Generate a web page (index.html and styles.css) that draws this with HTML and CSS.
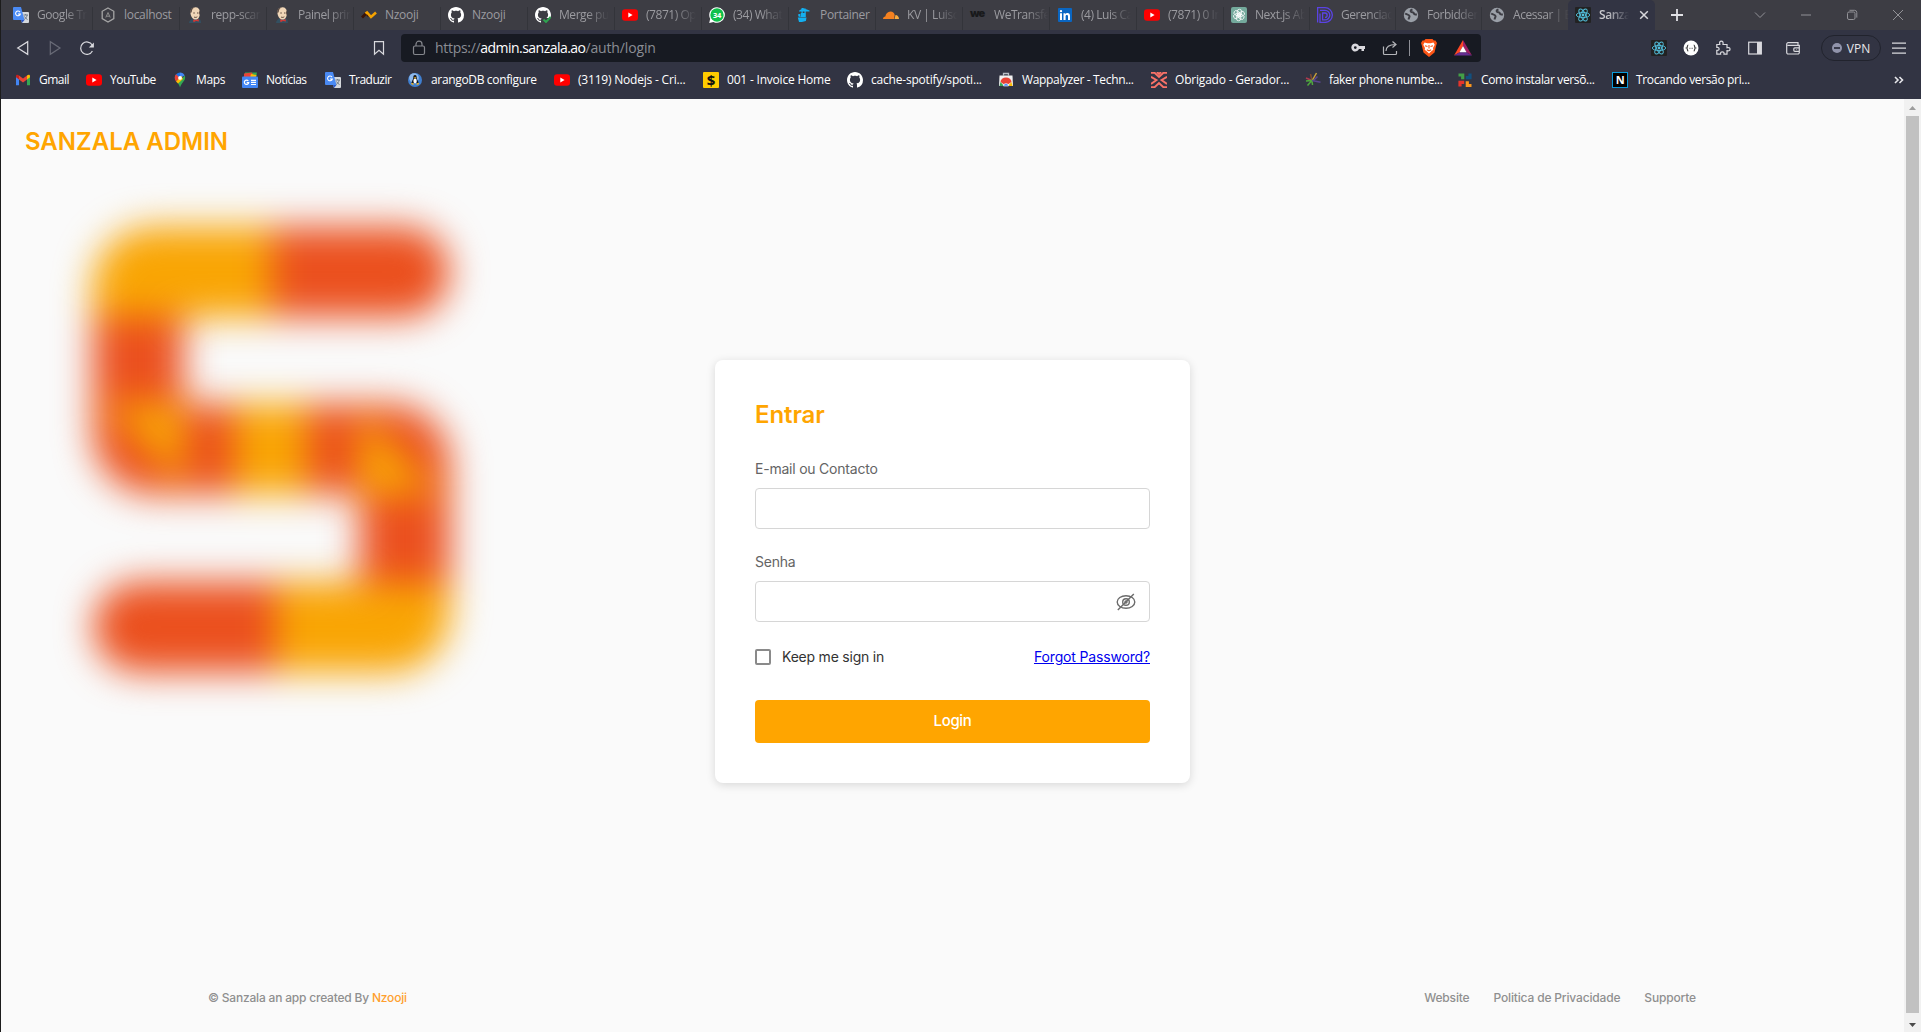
FILE: index.html
```html
<!DOCTYPE html>
<html lang="pt">
<head>
<meta charset="utf-8">
<title>Sanzala Admin</title>
<link rel="stylesheet" href="styles.css">
</head>
<body>
<svg class="sprite" aria-hidden="true">
  <symbol id="translate" viewBox="0 0 16 16"><path d="M6 5h9a1 1 0 0 1 1 1v9a1 1 0 0 1-1 1H9z" fill="#d5d8dc"/><path d="M1 0h7l3.500 13H1a1 1 0 0 1-1-1V1a1 1 0 0 1 1-1z" fill="#4a8af4"/><path d="M8 13h3.500L9 16z" fill="#2a56c6"/><path d="M7 5.100A2.400 2.400 0 1 0 7.300 7H5" fill="none" stroke="#fff" stroke-width="1.100"/><path d="M10.500 8h4.500M12.600 7v1M14.200 8c-.4 2-1.600 3.500-3 4.500M11.500 9.500c.6 1.300 1.700 2.400 3 3" fill="none" stroke="#6f7b88" stroke-width="1"/></symbol>
  <symbol id="hexa" viewBox="0 0 16 16"><path d="M8 1l5.800 3.300v7.300L8 15l-5.800-3.400V4.300z" fill="none" stroke="#a5a5a5" stroke-width="1.300"/><path d="M5.800 10.500L8 5.500l2.200 5M6.500 9.200h3" fill="none" stroke="#8d8d8d" stroke-width="1"/></symbol>
  <symbol id="jenkins" viewBox="0 0 16 16"><path d="M2 16c0-2 2-4 3-4.500l6-.5c2 .5 3 2.500 3 5z" fill="#335061"/><path d="M3.500 4C4 1.500 6 .3 8.300.3c3 0 4.600 2 4.700 5 .1 3.500-1.300 7.300-4.300 7.300C5 12.600 3 8 3.500 4z" fill="#f0d6b7"/><path d="M3.300 6C2.800 2.500 5 .3 8 .3c-2 1-3.200 2.300-3.300 5zM12.300 3c1 1.500.9 4 .4 5.500L12 6z" fill="#5a4a42"/><path d="M6.300 6h1.500M10 6h1.500M7 10c1 .6 2.500.5 3.300-.2" stroke="#49372d" stroke-width=".9" fill="none"/><path d="M6 12.300l2.500 1 3-1.300.5 2.500-3-.6-2.500 1.300z" fill="#d33833"/></symbol>
  <symbol id="zig" viewBox="0 0 16 16"><path d="M1 10.500L5.500 6l2.500 3" fill="none" stroke="#3a1408" stroke-width="2.800"/><path d="M4.500 6.500L6 5.500l4 4.500 5-4.500" fill="none" stroke="#f5a300" stroke-width="2.600"/></symbol>
  <symbol id="github" viewBox="0 0 16 16"><path fill="#fff" d="M8 0C3.580 0 0 3.580 0 8c0 3.540 2.290 6.530 5.470 7.590.4.070.55-.17.55-.38 0-.19-.010-.82-.010-1.490-2.010.37-2.530-.49-2.690-.94-.090-.23-.48-.94-.82-1.130-.28-.15-.68-.52-.010-.53.63-.010 1.080.58 1.230.82.72 1.210 1.870.87 2.330.66.070-.52.28-.87.510-1.070-1.780-.2-3.640-.89-3.640-3.950 0-.87.310-1.590.82-2.150-.080-.2-.36-1.020.080-2.120 0 0 .67-.21 2.200.82.64-.18 1.320-.27 2-.27s1.360.090 2 .27c1.530-1.040 2.200-.82 2.200-.82.44 1.100.16 1.920.080 2.120.510.56.82 1.270.82 2.150 0 3.070-1.870 3.750-3.650 3.950.29.25.54.73.54 1.480 0 1.070-.010 1.930-.010 2.200 0 .21.15.46.55.38A8.010 8.010 0 0 0 16 8c0-4.420-3.580-8-8-8z"/></symbol>
  <symbol id="github-ok" viewBox="0 0 16 16"><use href="#github"/><path d="M7 11h9v5H7z" fill="#3d3d44"/><path d="M8.500 12.500l2.500 2.500 4.600-5" stroke="#2ea44f" stroke-width="1.900" fill="none"/></symbol>
  <symbol id="youtube" viewBox="0 0 16 16"><rect y="2.300" width="16" height="11.500" rx="3" fill="#f00"/><path d="M6.300 5.600v4.900l4.300-2.450z" fill="#fff"/></symbol>
  <symbol id="whats" viewBox="0 0 16 16"><path d="M8 .2a7.800 7.800 0 1 1-3.600 14.700L.2 16l1-4.200A7.800 7.800 0 0 1 8 .2z" fill="#fff"/><circle cx="8" cy="8" r="6.700" fill="#0fc14b"/><text x="8" y="10.800" text-anchor="middle" font-size="7.500" font-weight="700" fill="#fff">34</text></symbol>
  <symbol id="portainer" viewBox="0 0 16 16"><path d="M5.500 1h1.200v8H5.500zM8.500 1.500h1.200V8H8.500zM3 3.800L7 1l6.500 2.600v.8L3 4.600zM2.300 7h2v2.200h-2zM4.800 6h5v4h-7V9.500h2zM1.800 10.500h8.700l-.6 3.500-4 1H3z" fill="#13b0f0"/></symbol>
  <symbol id="cloud" viewBox="0 0 16 16"><path d="M0 12c0-1.600 1-2.500 2.300-2.500C2.800 6.700 4.700 4.500 7.500 4.500c2.300 0 3.800 1.500 4.200 3.500L11 12z" fill="#f48120"/><path d="M11.500 12l1-4c2 0 3.500 1.800 3.500 4z" fill="#faad3f"/></symbol>
  <symbol id="linkedin" viewBox="0 0 16 16"><rect x="1" y="1" width="14" height="14" rx="1" fill="#0a66c2"/><path d="M3 6.300h2V13H3zM4 3a1.150 1.150 0 1 1 0 2.300A1.150 1.150 0 0 1 4 3zM6.500 6.300h1.900v.9c.9-1.600 4.600-1.700 4.600 1.600V13h-2V9.300c0-1.900-2.400-1.700-2.400 0V13H6.500z" fill="#fff"/></symbol>
  <symbol id="gpt" viewBox="0 0 16 16"><rect width="16" height="16" rx="2" fill="#74aa9c"/><g fill="none" stroke="#fff" stroke-width=".8"><rect id="lobe" x="6.300" y="2.300" width="4.300" height="6.800" rx="2.100"/><use href="#lobe" transform="rotate(60 8 8)"/><use href="#lobe" transform="rotate(120 8 8)"/><use href="#lobe" transform="rotate(180 8 8)"/><use href="#lobe" transform="rotate(240 8 8)"/><use href="#lobe" transform="rotate(300 8 8)"/></g></symbol>
  <symbol id="dd" viewBox="0 0 16 16"><path d="M.6 15.400V.7H8a7.300 7.300 0 0 1 0 14.700H3V6.500M3 3.300h5a4.800 4.800 0 0 1 0 9.600H5.600V6H8a2 2 0 0 1 0 4.300" fill="none" stroke="#5b43e6" stroke-width="1.300"/></symbol>
  <symbol id="globe" viewBox="0 0 16 16"><circle cx="8" cy="8" r="7.200" fill="#9ba0a8"/><path d="M2.200 6.500c1.500 1 3.800 1 4.300 2.500.4 1.200-1 1.700-.8 3.500M9.500 2.500C8 3 7 3.800 8 4.800c1 .8 2.300 0 2.800 1.300.4 1.200 1.500 1.700 3 1.200" fill="none" stroke="#3d3d44" stroke-width="2"/></symbol>
  <symbol id="react" viewBox="0 0 16 16"><rect width="16" height="16" rx="1" fill="#222"/><g fill="none" stroke="#53c1de" stroke-width=".9"><ellipse cx="8" cy="8" rx="6.700" ry="2.600"/><ellipse cx="8" cy="8" rx="6.700" ry="2.600" transform="rotate(60 8 8)"/><ellipse cx="8" cy="8" rx="6.700" ry="2.600" transform="rotate(120 8 8)"/></g><circle cx="8" cy="8" r="1.400" fill="#53c1de"/></symbol>
  <symbol id="gmail" viewBox="0 0 16 16"><path d="M1 4v9.300h3V7z" fill="#4285f4"/><path d="M15 4v9.300h-3V7z" fill="#34a853"/><path d="M4 3.500l4 3 4-3v4L8 10.500l-4-3z" fill="#ea4335"/><path d="M1 4.200C1 2.700 2.600 2.300 4 3.500v4L1 5.300z" fill="#c5221f"/><path d="M15 4.200c0-1.500-1.600-1.900-3-.7v4l3-2.200z" fill="#fbbc04"/></symbol>
  <symbol id="maps" viewBox="0 0 16 16"><path d="M2.800 5.500A5.300 5.300 0 0 1 8 .5L8 6z" fill="#1a73e8"/><path d="M8 .5a5.300 5.300 0 0 1 4.700 3L8 6z" fill="#4285f4"/><path d="M4 2.200L8 6 4 9.500C2.300 7 2.200 4.300 4 2.200z" fill="#ea4335"/><path d="M12.700 3.500c1.300 3-.4 5.200-2 7C9 12.500 8.700 14 8 15.500 7.500 14 7 12.700 5.800 11.300z" fill="#34a853"/><path d="M4 9.500L9.500 4l1.500 3-5 4.600z" fill="#fbbc04"/><circle cx="8" cy="5.900" r="1.900" fill="#fff"/></symbol>
  <symbol id="news" viewBox="0 0 16 16"><path d="M3 .5h12l-1 5H3z" fill="#34a853"/><path d="M2 1.500l8-1 2 5H2z" fill="#ea4335"/><path d="M9 2l5.500 1-1 3H8z" fill="#fbbc04"/><rect y="4.500" width="16" height="11.500" rx="1" fill="#4285f4"/><path d="M6.300 8.900A2.200 2.200 0 1 0 6.700 10.700H4.700M9 8.300h5M9 10.400h5M9 12.500h5" fill="none" stroke="#fff" stroke-width="1.200"/></symbol>
  <symbol id="linux" viewBox="0 0 16 16"><circle cx="8" cy="8" r="7" fill="#3f7fd0"/><circle cx="7" cy="6" r="4.800" fill="#8fb9ea"/><path d="M8 3c1.500 0 1.700 1.300 1.700 2.700s1.800 3.300 1.800 5.300h-7c0-2 1.800-3.500 1.800-5.300S6.500 3 8 3z" fill="#16181c"/><ellipse cx="8.100" cy="9" rx="1.700" ry="2.400" fill="#fff"/><path d="M4.300 11.300l2.300 1M11.900 11.300l-2.300 1M7.400 5.700h1.400" stroke="#f0b21a" stroke-width="1.400"/></symbol>
  <symbol id="dollar" viewBox="0 0 16 16"><rect width="16" height="16" rx="1" fill="#fc0"/><text x="8" y="13.500" text-anchor="middle" font-size="15" font-weight="700" fill="#111">$</text></symbol>
  <symbol id="store" viewBox="0 0 16 16"><path d="M5.500 3.500V1.500h5v2" fill="none" stroke="#b8bdc4" stroke-width="1.300"/><path d="M1.500 3.500h13l.5 10.500H1z" fill="#f1f1f1"/><path d="M2.500 10a5.500 4.500 0 0 1 11 0L10.500 12h-5z" fill="#ea4335"/><path d="M2.500 10L6 14H1.500z" fill="#34a853"/><path d="M13.500 10L10 14h4.500z" fill="#fbbc04"/><path d="M5.500 14a2.500 2.500 0 0 1 5 0z" fill="#4285f4" stroke="#fff" stroke-width=".6"/></symbol>
  <symbol id="cross" viewBox="0 0 16 16"><path d="M0 .8h3.600L8 5 12.400.8H16M0 15.200h3.600L8 11l4.400 4.200H16M0 4.800L5.500 8 0 12M16 4.800L10.500 8 16 12M6 0l2 2 2-2" fill="none" stroke="#fa7268" stroke-width="1.900"/></symbol>
  <symbol id="faker" viewBox="0 0 16 16"><g fill="none" stroke-width="1.500"><path d="M7 8.500L1 6" stroke="#b03a4e"/><path d="M7 8l-1.500-6" stroke="#7c4a30"/><path d="M7.500 8L11.500 1" stroke="#c9a13a"/><path d="M1 9l6-.5L2.500 13.500M7 8.500l.5 4.500" stroke="#4fa83d"/><path d="M7 8.500l8.500 1.700M9 8l3.500-3.500" stroke="#5a4590"/></g></symbol>
  <symbol id="joomla" viewBox="0 0 16 16"><g fill="none" stroke-width="3.200"><path d="M1.500 3h4.200v4.200" stroke="#43a047"/><path d="M13 1.500v4.200H8.800" stroke="#12507f"/><path d="M14.500 13.500h-4.200V9.300" stroke="#f9951d"/><path d="M3 14.500v-4.200h4.200" stroke="#e5342b"/></g></symbol>
  <symbol id="nbox" viewBox="0 0 16 16"><rect x=".5" y=".5" width="15" height="15" fill="#000" stroke="#0a9bdc"/><text x="8" y="12" text-anchor="middle" font-size="11" font-weight="700" fill="#fff">N</text></symbol>
</svg>

<header class="browser">
  <div class="tabs">
    <div class="tab fade"><svg class="fav"><use href="#translate"/></svg><span>Google Tr</span></div>
    <div class="tab"><svg class="fav"><use href="#hexa"/></svg><span>localhost</span></div>
    <div class="tab fade"><svg class="fav"><use href="#jenkins"/></svg><span>repp-scan</span></div>
    <div class="tab fade"><svg class="fav"><use href="#jenkins"/></svg><span>Painel prin</span></div>
    <div class="tab"><svg class="fav"><use href="#zig"/></svg><span>Nzooji</span></div>
    <div class="tab"><svg class="fav"><use href="#github"/></svg><span>Nzooji</span></div>
    <div class="tab fade"><svg class="fav"><use href="#github-ok"/></svg><span>Merge pu</span></div>
    <div class="tab fade"><svg class="fav"><use href="#youtube"/></svg><span>(7871) Op</span></div>
    <div class="tab fade"><svg class="fav"><use href="#whats"/></svg><span>(34) What</span></div>
    <div class="tab"><svg class="fav"><use href="#portainer"/></svg><span>Portainer</span></div>
    <div class="tab fade"><svg class="fav"><use href="#cloud"/></svg><span>KV | Luisc</span></div>
    <div class="tab fade"><div class="fav we">we</div><span>WeTransfe</span></div>
    <div class="tab fade"><svg class="fav"><use href="#linkedin"/></svg><span>(4) Luis Ca</span></div>
    <div class="tab fade"><svg class="fav"><use href="#youtube"/></svg><span>(7871) 0 In</span></div>
    <div class="tab narrow fade"><svg class="fav"><use href="#gpt"/></svg><span>Next.js Ab</span></div>
    <div class="tab narrow fade"><svg class="fav"><use href="#dd"/></svg><span>Gerenciad</span></div>
    <div class="tab narrow fade"><svg class="fav"><use href="#globe"/></svg><span>Forbidden</span></div>
    <div class="tab last fade"><svg class="fav"><use href="#globe"/></svg><span>Acessar | E</span></div>
    <div class="tab active fade"><svg class="fav"><use href="#react"/></svg><span>Sanza</span><svg class="close" viewBox="0 0 10 10"><path d="M1.200 1.200l7.600 7.600M8.800 1.200L1.200 8.800"/></svg></div>
    <svg class="plus" viewBox="0 0 12 12"><path d="M6 0v12M0 6h12"/></svg>
    <div class="window">
      <svg viewBox="0 0 12 12"><path d="M1 3.500l5 5 5-5"/></svg>
      <svg viewBox="0 0 12 12"><path d="M1 6h10"/></svg>
      <svg viewBox="0 0 12 12"><rect x="1.500" y="3" width="7.500" height="7.500" rx="1.500"/><path d="M3.500 1.300h5a2.300 2.300 0 0 1 2.300 2.300v5"/></svg>
      <svg viewBox="0 0 12 12"><path d="M1 1l10 10M11 1L1 11"/></svg>
    </div>
  </div>

  <div class="toolbar">
    <div class="nav">
      <svg viewBox="0 0 16 16"><path d="M12.700 1.700v12.600L2.700 8z"/></svg>
      <svg class="off" viewBox="0 0 16 16"><path d="M3.300 1.700v12.600L13 8z"/></svg>
      <svg viewBox="0 0 16 16"><path d="M13.400 11A6.200 6.200 0 1 1 13.200 5"/><path class="solid" d="M14.900 2.500v5H9.800z"/></svg>
    </div>
    <svg class="mark" viewBox="0 0 16 16"><path d="M3.500 1.700h9v12.500L8 10.300l-4.500 3.900z"/></svg>
    <div class="url">
      <svg class="lock" viewBox="0 0 16 16"><rect x="2.500" y="6" width="11" height="8.500" rx="1.500"/><path d="M5 6V4.200a3 3 0 0 1 6 0V6"/></svg>
      <span class="addr"><span class="proto">https://</span><b>admin.sanzala.ao</b><span class="path">/auth/login</span></span>
      <div class="actions">
        <svg viewBox="0 0 16 16"><path class="solid" fill-rule="evenodd" d="M9 6h6v3h-1v2h-2.500V9H9a4 4 0 1 1 0-3zM5.300 6.200a1.400 1.400 0 1 0 0 2.800 1.400 1.400 0 0 0 0-2.800z"/></svg>
        <svg viewBox="0 0 16 16"><path d="M1.500 6.500v7a1 1 0 0 0 1 1h11a1 1 0 0 0 1-1V11M4 11c0-4 3-6.500 9.500-6.500M10.500 1.500l3.500 3-3.500 3"/></svg>
        <i></i>
        <svg class="brave" viewBox="0 0 16 18"><path d="M4.500 0h7l1.300 1.500h1.700L16 4l-.8 2.500-1.700 7L8 18l-5.500-4.500-1.700-7L0 4l1.500-2.500h1.700z" fill="#fb5516"/><path d="M3.500 3.500l3 .8h3l3-.8 1.200 2.300L12 9l.3 1.700-2.500 2L8 14.500l-1.800-1.800-2.500-2L4 9 2.300 5.800z" fill="#fff"/><path d="M4 6.700l2.500.8M12 6.700l-2.500.8M8 6v3.500M5.800 10.700L8 11.800l2.200-1.100" stroke="#fb5516" stroke-width="1.100" fill="none"/></svg>
        <svg class="bat" viewBox="0 0 18 16"><path d="M9 0L0 15.500l5.700-3.300L9 6z" fill="#ff4724"/><path d="M9 0l9 15.500-5.700-3.300L9 6z" fill="#9e1f63"/><path d="M0 15.500h18l-5.700-3.300H5.700z" fill="#662d91"/><path d="M9 6l3.500 6.300h-7z" fill="#fff"/></svg>
      </div>
    </div>
    <div class="ext">
      <svg class="plain"><use href="#react"/></svg>
      <svg viewBox="0 0 16 16" class="plain"><circle cx="8" cy="8" r="7.500" fill="#fff"/><path d="M5.300 5C3.800 5 5 7.500 3.600 8 5 8.500 3.800 11 5.300 11M10.700 5c1.500 0 .3 2.500 1.700 3-1.400.5-.2 3-1.700 3" fill="none" stroke="#444"/><path d="M6.200 8.300h3.800" stroke="#999" stroke-dasharray="1 .4"/></svg>
      <svg viewBox="0 0 16 16"><path d="M1.800 4.500h3C4.200 2 5 1.200 6.300 1.200S8.500 2 8 4.500h4v3.200c2.300-.5 3 .3 3 1.500s-.8 2-3 1.500v3.500H9c.3-1.600-.4-2.400-1.700-2.400s-2 .8-1.700 2.400H1.800v-3.800c1.600.2 2.300-.5 2.300-1.500s-.7-1.800-2.300-1.500z"/></svg>
      <svg viewBox="0 0 16 16"><rect x="1.700" y="2.200" width="12.600" height="11.800"/><path class="solid" d="M10 2h4.500v12H10z"/></svg>
      <svg class="wallet" viewBox="0 0 16 16"><path d="M13 5V2.700H3.200A1.500 1.500 0 0 0 1.700 4.200v8.300A1.500 1.500 0 0 0 3.200 14h9.600a1.500 1.500 0 0 0 1.500-1.500V5.300H2.500M14.300 7.800h-4.500a1 1 0 0 0-1 1v1.500a1 1 0 0 0 1 1h4.500M11.500 9.300v.5"/></svg>
      <span class="vpn"><i></i>VPN</span>
      <svg viewBox="0 0 16 16"><path d="M1 3.200h14M1 8.200h14M1 13.200h14"/></svg>
    </div>
  </div>

  <nav class="bookmarks">
    <a><svg><use href="#gmail"/></svg><span class="t3">Gmail</span></a>
    <a><svg><use href="#youtube"/></svg><span class="t3">YouTube</span></a>
    <a><svg><use href="#maps"/></svg><span class="t2">Maps</span></a>
    <a><svg><use href="#news"/></svg><span class="t3">Notícias</span></a>
    <a><svg><use href="#translate"/></svg><span class="t3">Traduzir</span></a>
    <a><svg><use href="#linux"/></svg><span class="t2">arangoDB configure</span></a>
    <a><svg><use href="#youtube"/></svg><span>(3119) Nodejs - Cri...</span></a>
    <a><svg><use href="#dollar"/></svg><span>001 - Invoice Home</span></a>
    <a><svg><use href="#github"/></svg><span>cache-spotify/spoti...</span></a>
    <a><svg><use href="#store"/></svg><span class="t2">Wappalyzer - Techn...</span></a>
    <a><svg><use href="#cross"/></svg><span>Obrigado - Gerador...</span></a>
    <a><svg><use href="#faker"/></svg><span class="t2">faker phone numbe...</span></a>
    <a><svg><use href="#joomla"/></svg><span class="t2">Como instalar versõ...</span></a>
    <a><svg><use href="#nbox"/></svg><span class="t2">Trocando versão pri...</span></a>
    <svg class="more" viewBox="0 0 10 10"><path d="M1 2l3 3-3 3M5.500 2l3 3-3 3"/></svg>
  </nav>
</header>

<div class="viewport">
  <div class="page">
    <h1>SANZALA ADMIN</h1>
    <svg class="logo" viewBox="0 0 480 600">
      <defs>
        <mask id="ess"><path d="M404 173H154a16 16 0 0 0-16 16V334a16 16 0 0 0 16 16H389a16 16 0 0 1 16 16V512a16 16 0 0 1-16 16H139" fill="none" stroke="#fff" stroke-width="91" stroke-linecap="round"/></mask>
      </defs>
      <g class="soft">
        <g mask="url(#ess)">
          <path d="M0 0h480v600H0z" fill="#eb501e"/>
          <path d="M60 100H272V218H60zM104 304H184V388zM234 290h74v120h-74zM359 312V396H439zM275 484H480V600H275z" fill="#f9a504"/>
        </g>
      </g>
    </svg>

    <main class="card">
      <h2>Entrar</h2>
      <label>E-mail ou Contacto</label>
      <div class="field"></div>
      <label>Senha</label>
      <div class="field"><svg viewBox="0 0 20 18"><ellipse cx="10" cy="9" rx="8.800" ry="6.300"/><circle cx="10" cy="9" r="3.300"/><circle cx="10" cy="9" r="1"/><path d="M1.800 17L17.800 1"/></svg></div>
      <div class="options">
        <span class="check"></span><span class="keep">Keep me sign in</span><a class="forgot">Forgot Password?</a>
      </div>
      <div class="login">Login</div>
    </main>

    <footer>
      <p>© Sanzala an app created By <em>Nzooji</em></p>
      <div class="links"><a>Website</a><a>Politica de Privacidade</a><a>Supporte</a></div>
    </footer>
  </div>
  <div class="scroll">
    <svg viewBox="0 0 17 17"><path d="M5 11l3.500-4 3.500 4z" fill="#9c9c9c"/></svg>
    <div class="thumb"></div>
    <svg viewBox="0 0 17 17"><path d="M5 8l3.500 4L12 8z" fill="#4b4b4b"/></svg>
  </div>
</div>
</body>
</html>
```
FILE: styles.css
```css
* { box-sizing: border-box; }
body {
  margin: 0;
  width: 1921px;
  height: 1032px;
  overflow: hidden;
  display: flex;
  flex-direction: column;
  border-left: 1px solid #1c1c1c;
  background: #fafafa;
  font-family: Inter, "Liberation Sans", sans-serif;
}
.sprite { position: absolute; width: 0; height: 0; }
svg { display: block; flex: none; }

/* Browser chrome */
.browser {
  height: 99px;
  flex: none;
  background: #323443;
  font: 12px "Open Sans", "Noto Sans", sans-serif;
}
.tabs {
  height: 30px;
  display: flex;
  padding-left: 5px;
  background: #3d3d44;
}
.tab {
  width: 87px;
  flex: none;
  display: flex;
  align-items: center;
  padding-left: 7px;
  gap: 8px;
  color: #9b9ba0;
  letter-spacing: -0.3px;
  background: linear-gradient(#33343a, #33343a) right 7px / 1px 23px no-repeat;
}
.tab.narrow { width: 86px; }
.tab.last { background: none; width: 86px; }
.tab span {
  flex: 1;
  white-space: nowrap;
  line-height: 18px;
  margin-right: 2px;
}
.tab.fade span {
  letter-spacing: -0.45px;
  margin-right: 4px;
  -webkit-mask-image: linear-gradient(270deg, transparent 2px, #000 24px);
  mask-image: linear-gradient(270deg, transparent 2px, #000 24px);
}
.tab.active {
  background: #323443;
  border-radius: 5px 5px 0 0;
  font-weight: 600;
  color: #c9c9ce;
}
.tab.active span { margin-right: 0; }
.fav { width: 16px; height: 16px; flex: none; }
.we {
  font: 900 11px/13px Inter, sans-serif;
  letter-spacing: -1px;
  color: #18191b;
}
.tab .close {
  width: 10px;
  height: 10px;
  margin-right: 7px;
  stroke: #d8d8dc;
  stroke-width: 1.5;
}
.plus {
  width: 12px;
  height: 12px;
  margin: 9px 0 0 16px;
  stroke: #e2e2e6;
  stroke-width: 1.8;
}
.window {
  margin-left: auto;
  display: flex;
  align-items: center;
  gap: 34px;
  padding-right: 17px;
}
.window svg {
  width: 12px;
  height: 12px;
  fill: none;
  stroke: #929297;
}
.toolbar {
  height: 36px;
  display: grid;
  grid-template-columns: 366px 34px 1080px 1fr;
  align-items: center;
}
.toolbar svg {
  width: 16px;
  height: 16px;
  fill: none;
  stroke: #d9d9de;
  stroke-width: 1.2;
}
.toolbar .solid { fill: #d9d9de; stroke: none; }
.nav { display: flex; gap: 16px; padding-left: 14px; }
.toolbar .off { stroke: #686a76; }
.mark { margin-left: 4px; }
.url {
  height: 28px;
  display: flex;
  align-items: center;
  padding: 0 8px 0 10px;
  background: #171a22;
  border-radius: 4px;
}
.toolbar .lock { stroke: #85878d; }
.addr { font-size: 14px; line-height: 20px; margin-left: 8px; color: #8a8d94; }
.addr b { font-weight: 400; color: #fff; letter-spacing: -0.54px; }
.proto { letter-spacing: -0.3px; }
.path { letter-spacing: -0.14px; }
.actions { margin-left: auto; display: flex; align-items: center; }
.toolbar .actions svg { stroke: #b5b6ba; margin-right: 16px; }
.actions i { width: 1px; height: 16px; background: #8e9097; margin: 0 11px 0 -5px; }
.toolbar .actions .brave { width: 16px; height: 18px; stroke: none; margin-right: 17px; }
.toolbar .actions .bat { width: 18px; stroke: none; margin-right: 1px; }
.ext { display: flex; align-items: center; gap: 16px; padding-left: 170px; }
.ext .plain { stroke: none; }
.ext .wallet { margin-left: 6px; }
.vpn {
  width: 60px;
  height: 26px;
  margin: 0 -6px 0 4px;
  display: flex;
  align-items: center;
  justify-content: center;
  gap: 5px;
  border: 1px solid #21232d;
  border-radius: 13px;
  color: #e6e6ea;
}
.vpn i { width: 10px; height: 10px; border-radius: 50%; background: linear-gradient(#393b4a, #393b4a) center / 6px 2px no-repeat #9194ab; }
.bookmarks {
  height: 28px;
  display: grid;
  grid-template-columns: 71px 86px 70px 83px 82px 147px 149px 144px 151px 153px 154px 152px 155px 1fr auto;
  align-items: center;
  padding: 0 17px 0 14px;
  color: #fff;
}
.bookmarks a { display: flex; align-items: center; gap: 8px; white-space: nowrap; letter-spacing: -0.2px; }
.bookmarks a svg { width: 16px; height: 16px; }
.bookmarks span { line-height: 16px; margin-top: -1px; }
.bookmarks .t2 { letter-spacing: -0.34px; }
.bookmarks .t3 { letter-spacing: -0.52px; }
.more { width: 10px; height: 10px; fill: none; stroke: #e6e6ea; stroke-width: 1.6; }

/* Login page */
.viewport { flex: 1; display: flex; min-height: 0; }
.page {
  flex: 1;
  display: grid;
  grid-template-rows: 261px 1fr 53px;
  grid-template-columns: 714px 475px 1fr;
}
h1, h2 { margin: 0; font-size: 24px; line-height: 32px; font-weight: 600; color: #ffa500; }
h1 {
  grid-area: 1 / 1;
  margin: 27px 0 0 24px;
  letter-spacing: 0;
}
.logo { grid-area: 1 / 1 / 3 / 2; width: 480px; height: 600px; margin-left: -1px; overflow: visible; }
.soft { filter: blur(18px); }
.card {
  grid-area: 2 / 2;
  height: 423px;
  padding: 39px 40px 40px;
  display: flex;
  flex-direction: column;
  background: #fff;
  border-radius: 8px;
  box-shadow: 0 2px 10px rgba(0, 0, 0, 0.14);
  font-size: 14px;
}
h2 { font-weight: 600; letter-spacing: -0.1px; margin-bottom: 28px; }
.card label { line-height: 20px; letter-spacing: -0.22px; color: #646464; margin-bottom: 9px; }
.field {
  height: 41px;
  margin-bottom: 23px;
  padding-right: 13px;
  display: flex;
  align-items: center;
  justify-content: flex-end;
  border: 1px solid #d6d6d6;
  border-radius: 4px;
}
.field svg { width: 20px; height: 18px; fill: none; stroke: #6b6b6b; stroke-width: 1.4; }
.options { display: flex; align-items: center; height: 20px; margin: 2px 0 33px; }
.check { width: 16px; height: 16px; border: 2px solid #8a8a8a; border-radius: 2px; }
.keep, .forgot { margin-top: -1px; }
.keep { margin-left: 11px; letter-spacing: -0.22px; color: #333; }
.forgot { margin-left: auto; letter-spacing: -0.16px; color: #00e; text-decoration: underline; }
.login {
  height: 43px;
  background: #ffa500;
  border-radius: 4px;
  color: #fff;
  text-align: center;
  font: 500 15px/42px Inter, sans-serif;
  letter-spacing: -0.33px;
}
footer {
  grid-area: 3 / 1 / 4 / 4;
  display: flex;
  justify-content: space-between;
  padding: 9px 208px 0 207px;
  font-size: 12px;
  font-weight: 500;
  line-height: 20px;
  color: #8f8f8f;
}
footer p { margin: 0; letter-spacing: -0.2px; }
footer em { font-style: normal; color: #ff9f2e; }
.links { display: flex; gap: 24px; letter-spacing: -0.16px; }
.scroll { width: 17px; display: flex; flex-direction: column; background: #f1f1f1; }
.scroll svg { width: 17px; height: 17px; }
.thumb { flex: 1; margin: 0 2px 2px; background: #c1c1c1; }
```
